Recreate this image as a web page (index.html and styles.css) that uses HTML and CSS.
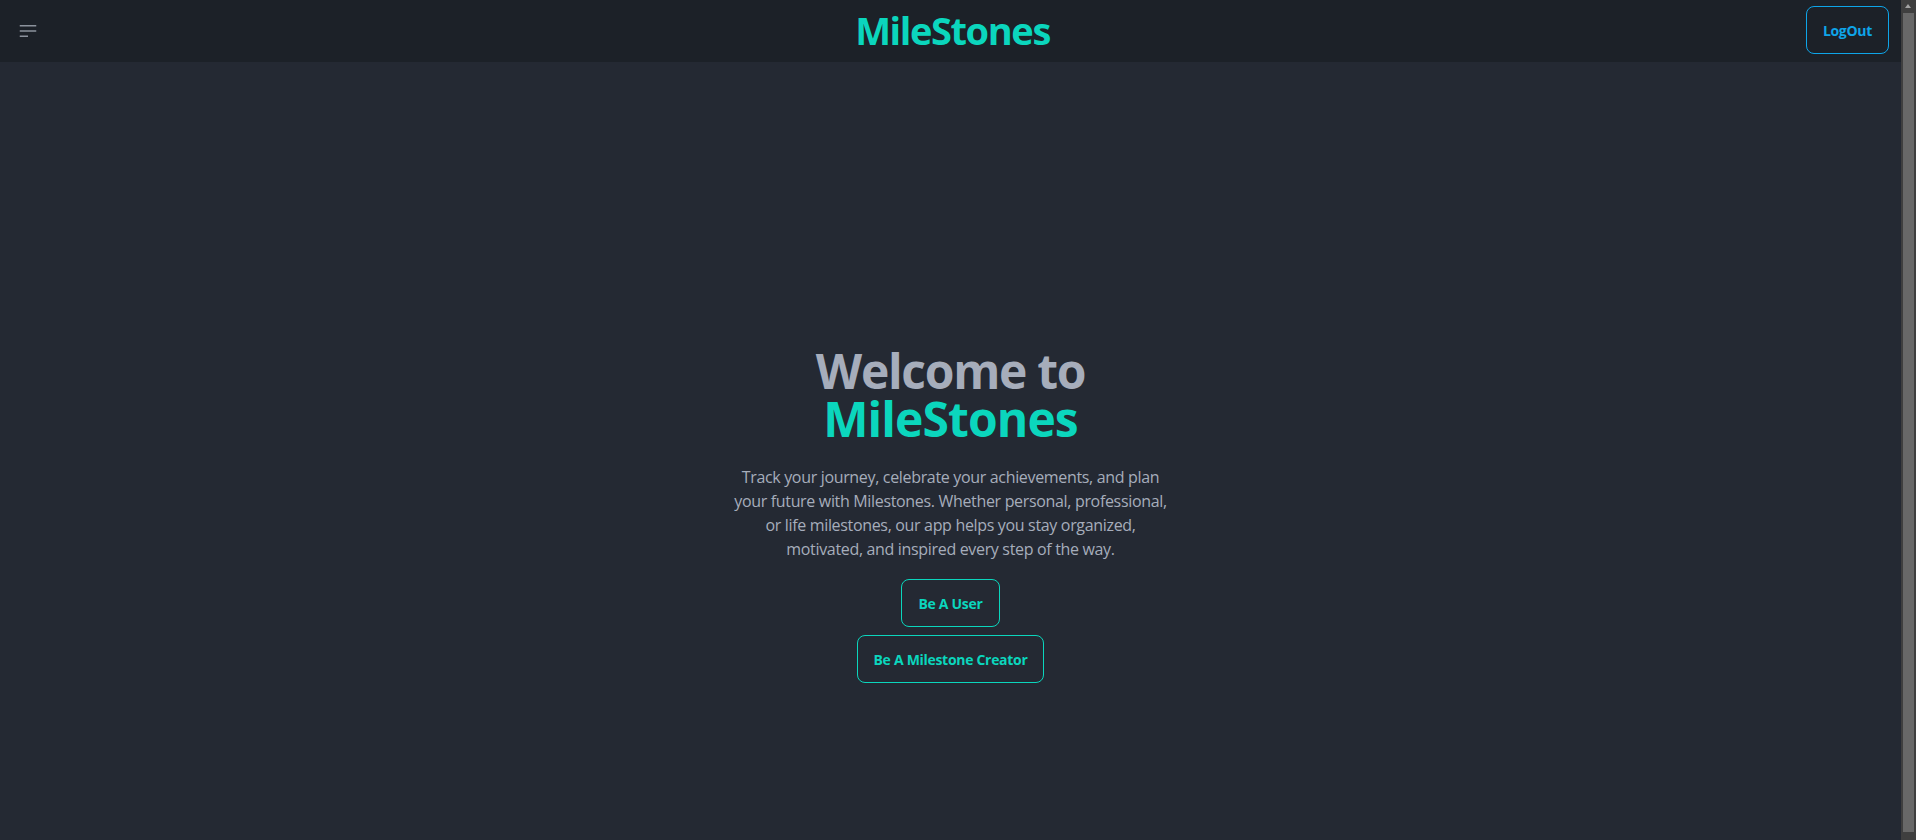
FILE: index.html
```html
<!DOCTYPE html>
<html lang="en">
<head>
<meta charset="utf-8">
<title>MileStones</title>
<link rel="stylesheet" href="styles.css">
</head>
<body>
<div class="page">
  <header class="navbar">
    <div class="nav-start">
      <button class="menu-btn" aria-label="Menu">
        <svg width="24" height="24" viewBox="0 0 24 24" fill="none" stroke="currentColor" stroke-width="1.5" stroke-linecap="butt"><path d="M3.75 6.75h16.5M3.75 12h16.5M3.75 17.25H12"/></svg>
      </button>
    </div>
    <div class="nav-center"><a class="brand">MileStones</a></div>
    <div class="nav-end"><button class="btn btn-logout">LogOut</button></div>
  </header>
  <main class="hero">
    <div class="hero-content">
      <h1 class="title"><span class="line">Welcome to</span> <span class="line accent">MileStones</span></h1>
      <p class="lead">Track your journey, celebrate your achievements, and plan your future with Milestones. Whether personal, professional, or life milestones, our app helps you stay organized, motivated, and inspired every step of the way.</p>
      <div class="actions">
        <button class="btn btn-teal">Be A User</button>
        <button class="btn btn-teal">Be A Milestone Creator</button>
      </div>
    </div>
  </main>
</div>
<div class="scrollbar" aria-hidden="true">
  <div class="sb-arrow"></div>
  <div class="sb-thumb"></div>
</div>
</body>
</html>
```
FILE: styles.css
```css
html {
  color-scheme: dark;
}
* { box-sizing: border-box; }
body {
  margin: 0;
  background: #242933;
  color: #a6adbb;
  font-family: "Open Sans", "Noto Sans", sans-serif;
  overflow: hidden;
}
.page {
  margin-right: 15px;
  height: 840px;
}
.navbar {
  height: 62px;
  background: #1c2128;
  display: flex;
  align-items: center;
  padding: 0 12px 2px 16px;
}
.nav-start, .nav-end { flex: 1; display: flex; }
.nav-end { justify-content: flex-end; }
.nav-center { flex: 0 0 auto; }
.menu-btn {
  background: none;
  border: 0;
  padding: 0;
  color: #8b929c;
  display: flex;
  margin-top: 2px;
}
.brand {
  font-size: 38px;
  font-weight: 700;
  color: #0bd6bd;
  letter-spacing: -1.4px;
  line-height: 1;
}
.btn {
  height: 48px;
  padding: 0 16px;
  border-radius: 8px;
  background: transparent;
  font-family: inherit;
  font-size: 14px;
  font-weight: 700;
  letter-spacing: -0.3px;
  cursor: pointer;
}
.btn-logout {
  border: 1px solid #0ea5e9;
  color: #0ea5e9;
}
.btn-teal {
  border: 1px solid #0bd6bd;
  color: #0bd6bd;
}
.hero {
  height: 778px;
  display: flex;
  justify-content: center;
  padding-top: 285px;
}
.hero-content {
  display: flex;
  flex-direction: column;
  align-items: center;
  text-align: center;
}
.title {
  margin: 0;
  font-size: 48px;
  line-height: 48px;
  font-weight: 700;
  letter-spacing: -1.3px;
  color: #a6adbb;
}
.line { display: block; height: 48px; }
.accent { color: #0bd6bd; letter-spacing: -0.9px; }
.lead {
  max-width: 448px;
  margin: 22px 0 18px;
  font-size: 16px;
  line-height: 24px;
  letter-spacing: -0.33px;
}
.actions {
  display: flex;
  flex-direction: column;
  align-items: center;
  gap: 8px;
}
.scrollbar {
  position: fixed;
  top: 0;
  right: 0;
  width: 15px;
  height: 100%;
  background: #3f3f3f;
}
.sb-arrow {
  position: absolute;
  top: 4px;
  left: 4px;
  width: 0;
  height: 0;
  border-left: 3.5px solid transparent;
  border-right: 3.5px solid transparent;
  border-bottom: 4px solid #a3a3a3;
}
.sb-thumb {
  position: absolute;
  top: 13px;
  left: 2px;
  width: 11px;
  height: 819px;
  background: #686868;
}
```
